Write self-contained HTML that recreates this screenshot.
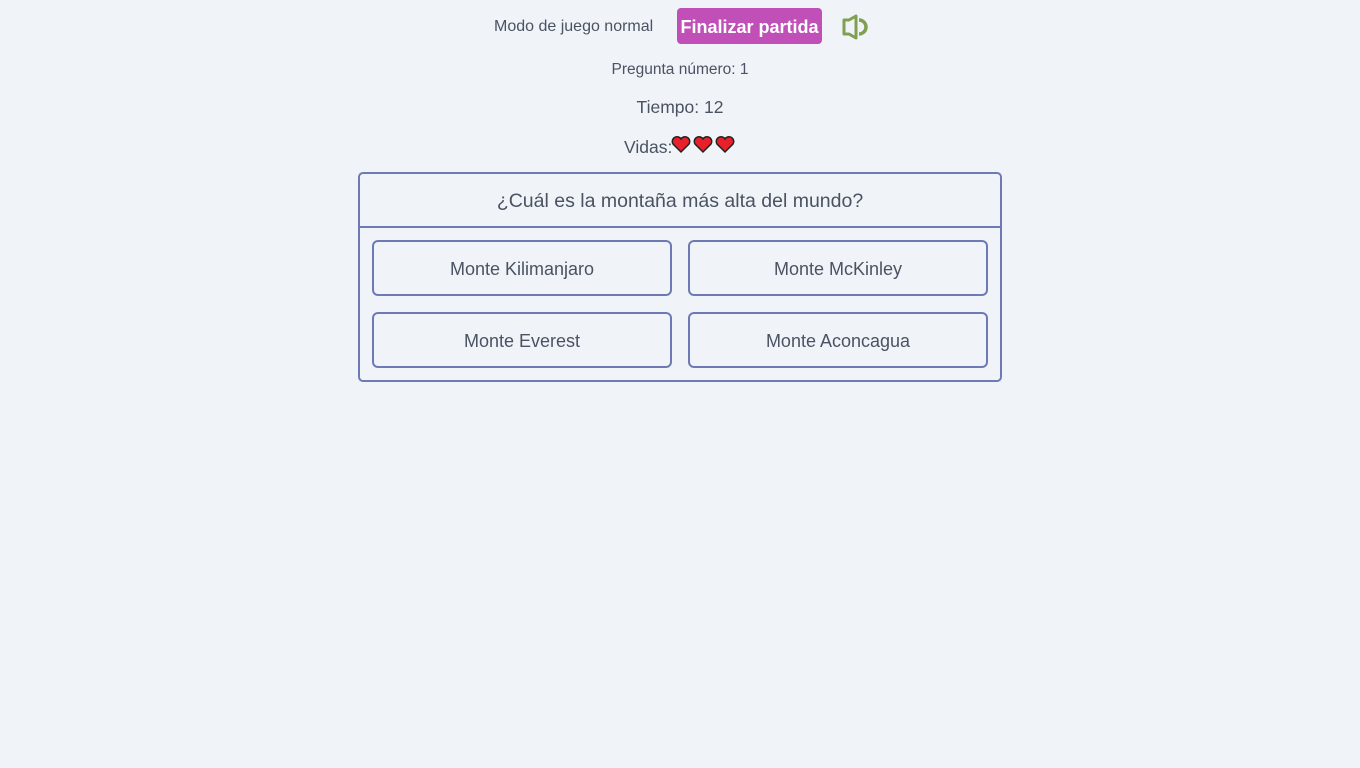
<!DOCTYPE html>
<html><head><meta charset="utf-8"><style>
body{margin:0;width:1360px;height:768px;background:#f0f4f9;font-family:"Liberation Sans",sans-serif;color:#4b5261;position:relative;overflow:hidden}
.a{position:absolute}
.c{text-align:center}
.box{left:358px;top:172px;width:640px;height:206px;border:2px solid #6e79b8;border-radius:5px;box-sizing:content-box}
.btn{position:absolute;width:296px;height:52px;border:2px solid #6e79b8;border-radius:6px;display:flex;align-items:center;justify-content:center;font-size:18px;box-sizing:border-box;padding-top:2px}
</style></head><body>
<div class="a" style="left:494px;top:18px;font-size:16px">Modo de juego normal</div>
<div class="a" style="left:677px;top:8px;width:145px;height:36px;background:#c050b8;border-radius:4px;color:#fff;font-weight:bold;font-size:18px;display:flex;align-items:center;justify-content:center;padding-top:2px;box-sizing:border-box">Finalizar partida</div>
<svg class="a" style="left:841px;top:14px" width="28" height="26" viewBox="0 0 28 26"><path d="M3 6h5l7-4v22l-7-4H3z" fill="none" stroke="#7fa050" stroke-width="3" stroke-linejoin="round"/><path d="M18 6a7 7 0 0 1 0 14" fill="none" stroke="#7fa050" stroke-width="3.5"/></svg>
<div class="a c" style="left:0;width:1360px;top:61px;font-size:15.5px">Pregunta número: 1</div>
<div class="a c" style="left:0;width:1360px;top:97px;font-size:17.5px">Tiempo: 12</div>
<div class="a" style="left:624px;top:137px;font-size:17.5px">Vidas:</div>
<svg class="a" style="left:671px;top:136px" width="66" height="18" viewBox="0 0 66 18">
<g id="h"><path d="M10 16L2 8a4.5 4.5 0 0 1 8-5a4.5 4.5 0 0 1 8 5z" fill="#e8202a" stroke="#222" stroke-width="1.5"/></g>
<use href="#h" x="22"/><use href="#h" x="44"/></svg>
<div class="a box"></div>
<div class="a" style="left:360px;top:226px;width:640px;height:2px;background:#6e79b8"></div>
<div class="a c" style="left:358px;width:644px;top:190px;font-size:19.5px">¿Cuál es la montaña más alta del mundo?</div>
<div class="btn" style="left:372px;top:240px;width:300px;height:56px">Monte Kilimanjaro</div>
<div class="btn" style="left:688px;top:240px;width:300px;height:56px">Monte McKinley</div>
<div class="btn" style="left:372px;top:312px;width:300px;height:56px">Monte Everest</div>
<div class="btn" style="left:688px;top:312px;width:300px;height:56px">Monte Aconcagua</div>
</body></html>
